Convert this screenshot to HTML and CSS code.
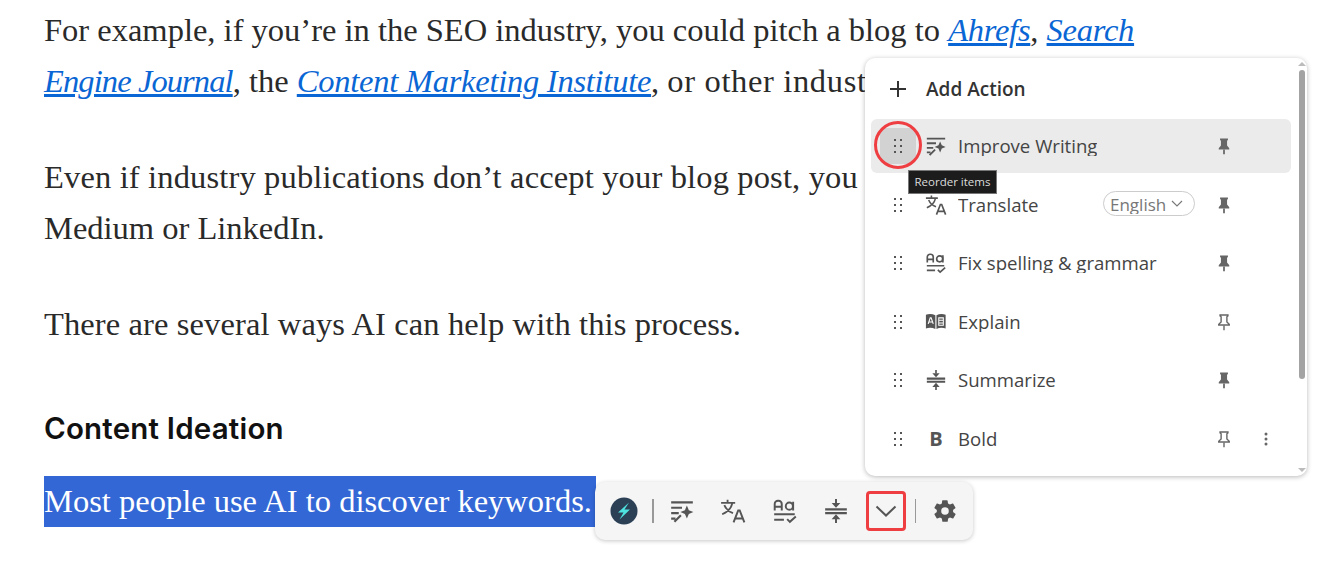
FILE: index.html
```html
<html>
<head>
<meta charset="utf-8">
<title>Content Ideation</title>
<link rel="stylesheet" href="styles.css">
</head>
<body>
<svg class="defs" width="0" height="0">
<defs>
<symbol id="i-improve" viewBox="0 0 24 24"><path d="M2 4h20M2 9h10M2 14h7M2 19h4M5 22l6-6" fill="none" stroke="currentColor" stroke-width="2"/><path d="M16.500 7l1.800 4.200 4.200 1.800-4.200 1.800-1.800 4.200-1.800-4.200-4.200-1.800 4.200-1.800z" fill="currentColor"/></symbol>
<symbol id="i-translate" viewBox="0 0 24 24"><path d="M1 4.500h13M7 1.500v3M11.500 4.500c-1 4.500-4.500 8.500-9.500 10.500M4 6.500c1.500 3.500 4 6 8 7.500" fill="none" stroke="currentColor" stroke-width="1.700"/><path d="M12.500 22.500l4.300-11h1.400l4.300 11M14 19h7" fill="none" stroke="currentColor" stroke-width="1.800"/></symbol>
<symbol id="i-spell" viewBox="0 0 24 24"><path d="M2.500 11.500v-6a3 3 0 0 1 3-3h.5a3 3 0 0 1 3 3v6M2.500 8h6.500" fill="none" stroke="currentColor" stroke-width="1.800"/><circle cx="16" cy="7.500" r="3.300" fill="none" stroke="currentColor" stroke-width="1.800"/><path d="M19.500 3.500v8M2 15h19M2 20h9M14 19.500l2.500 2.500 5.500-5" fill="none" stroke="currentColor" stroke-width="1.800"/></symbol>
<symbol id="i-sum" viewBox="0 0 24 24"><path d="M2 10.500h20M2 14h20" fill="none" stroke="currentColor" stroke-width="2.200"/><path d="M12 1v4M12 23v-4" fill="none" stroke="currentColor" stroke-width="1.800"/><path d="M8 4.500h8L12 9zM8 19.500h8L12 15z" fill="currentColor"/></symbol>
<symbol id="i-book" viewBox="0 0 24 24"><path d="M1 4c3-1 7-1 10.300.5v15C8 18 4 18 1 19zM22.500 4c-3-1-7-1-10 .5v15c3-1.500 7-1.500 10-.5z" fill="currentColor"/><path d="M3.500 14l2.200-6.500h1L9 14M4.500 12h3.500" fill="none" stroke="#fff" stroke-width="1.200"/><path d="M15 7.500h5v8h-5zM15 10h5M15 13h5" fill="none" stroke="#fff" stroke-width="1.100"/></symbol>
<symbol id="i-pin" viewBox="0 0 16 20"><path d="M3.500 1.500h9v1.500l-1 1v5.500l2.500 3v1.500H2v-1.500l2.500-3V4l-1-1z" fill="currentColor"/><path d="M7 14h2v5.500H7z" fill="currentColor"/></symbol>
<symbol id="i-pin-o" viewBox="0 0 16 20"><path d="M3.500 2h9v1l-1.200 1v6l2.700 2.500v1H2v-1L4.700 10V4l-1.200-1z" fill="none" stroke="currentColor" stroke-width="1.600"/><path d="M7.200 14h1.600v5.500H7.200z" fill="currentColor"/></symbol>
<symbol id="i-grip" viewBox="0 0 12 16"><g fill="currentColor"><rect x="2" y="1" width="2" height="2"/><rect x="8" y="1" width="2" height="2"/><rect x="2" y="7" width="2" height="2"/><rect x="8" y="7" width="2" height="2"/><rect x="2" y="13" width="2" height="2"/><rect x="8" y="13" width="2" height="2"/></g></symbol>
</defs>
</svg>

<div class="article">
<p>For example, if you’re in the SEO industry, you could pitch a blog to <a href="#">Ahrefs</a>, <a href="#">Search</a> <a href="#" class="tight">Engine Journal</a>, the <a href="#">Content Marketing Institute</a>, <span class="spread">or other industry publications.</span></p>
<p><span class="wider">Even if industry publications don’t accept your blog post, you can still publish it on</span> Medium or LinkedIn.</p>
<p class="wide">There are several ways AI can help with this process.</p>
<h3>Content Ideation</h3>
<p class="last"><span class="sel">Most people use AI to discover keywords.</span></p>
</div>

<div class="menu">
  <div class="add"><svg class="plus" viewBox="0 0 18 18"><path d="M9 1v16M1 9h16" stroke="currentColor" stroke-width="2"/></svg><span>Add Action</span></div>
  <div class="rows">
    <div class="row on">
      <span class="grip hot"><svg><use href="#i-grip"/></svg></span>
      <svg class="ico"><use href="#i-improve"/></svg>
      <span class="lbl">Improve Writing</span>
      <svg class="pin"><use href="#i-pin"/></svg>
    </div>
    <div class="row">
      <span class="grip"><svg><use href="#i-grip"/></svg></span>
      <svg class="ico"><use href="#i-translate"/></svg>
      <span class="lbl">Translate</span>
      <span class="lang"><span class="lang-t">English</span><svg viewBox="0 0 12 7"><path d="M1 1l5 5 5-5" fill="none" stroke="currentColor" stroke-width="1.100"/></svg></span>
      <svg class="pin"><use href="#i-pin"/></svg>
    </div>
    <div class="row">
      <span class="grip"><svg><use href="#i-grip"/></svg></span>
      <svg class="ico"><use href="#i-spell"/></svg>
      <span class="lbl">Fix spelling &amp; grammar</span>
      <svg class="pin"><use href="#i-pin"/></svg>
    </div>
    <div class="row">
      <span class="grip"><svg><use href="#i-grip"/></svg></span>
      <svg class="ico"><use href="#i-book"/></svg>
      <span class="lbl">Explain</span>
      <svg class="pin"><use href="#i-pin-o"/></svg>
    </div>
    <div class="row">
      <span class="grip"><svg><use href="#i-grip"/></svg></span>
      <svg class="ico"><use href="#i-sum"/></svg>
      <span class="lbl">Summarize</span>
      <svg class="pin"><use href="#i-pin"/></svg>
    </div>
    <div class="row">
      <span class="grip"><svg><use href="#i-grip"/></svg></span>
      <span class="ico bold">B</span>
      <span class="lbl">Bold</span>
      <svg class="pin"><use href="#i-pin-o"/></svg>
      <svg class="more" viewBox="0 0 4 14"><circle cx="2" cy="2" r="1.500"/><circle cx="2" cy="7" r="1.500"/><circle cx="2" cy="12" r="1.500"/></svg>
    </div>
  </div>
  <div class="bar"><i class="up"></i><b></b><i class="dn"></i></div>
  <div class="tip">Reorder items</div>
  <div class="ring"></div>
</div>

<div class="toolbar">
  <span class="logo"><svg viewBox="0 0 28 28"><circle cx="14" cy="14" r="13.500" fill="#2b3f55"/><path d="M19 5.500L8 15.500h5.500L9.500 22.500l10.500-10h-5.500z" fill="#4fe3e0"/></svg></span>
  <span class="sep"></span>
  <svg class="tb"><use href="#i-improve"/></svg>
  <svg class="tb"><use href="#i-translate"/></svg>
  <svg class="tb"><use href="#i-spell"/></svg>
  <svg class="tb"><use href="#i-sum"/></svg>
  <span class="chev"><svg viewBox="0 0 22 12"><path d="M1.500 1.500L11 10.500l9.500-9" fill="none" stroke="currentColor" stroke-width="2"/></svg></span>
  <span class="sep thin"></span>
  <svg class="gear" viewBox="0 0 24 24"><path fill-rule="evenodd" d="M19.400 13c.1-.3.100-.7.100-1s0-.7-.1-1l2.100-1.600c.2-.2.200-.4.100-.6l-2-3.500c-.1-.2-.4-.3-.6-.2l-2.500 1c-.5-.4-1.100-.7-1.700-1L14.400 2.500c0-.3-.2-.5-.5-.5h-4c-.2 0-.4.200-.5.400L9.100 5.100c-.6.300-1.200.6-1.700 1l-2.500-1c-.2-.1-.5 0-.6.200l-2 3.500c-.1.200-.1.500.1.600L4.500 11c0 .3-.1.700-.1 1s0 .7.100 1l-2.100 1.600c-.2.200-.2.400-.1.600l2 3.500c.1.200.4.300.6.200l2.500-1c.5.400 1.100.7 1.700 1l.4 2.600c0 .3.200.5.500.5h4c.2 0 .4-.2.500-.4l.4-2.700c.6-.3 1.200-.6 1.700-1l2.500 1c.2.100.5 0 .6-.2l2-3.500c.1-.2.1-.5-.1-.6zM12 15.500a3.500 3.500 0 1 1 0-7 3.500 3.500 0 0 1 0 7z" fill="currentColor"/></svg>
</div>
</body>
</html>
```

FILE: styles.css
```css
html,body{margin:0;padding:0;background:#fff;overflow:hidden}
body{height:562px;position:relative;font-family:"Open Sans","Noto Sans",sans-serif}
.defs{position:absolute}

.article{width:1100px;padding:5px 0 0 44px;font-family:"Liberation Serif",serif;font-size:32.500px;line-height:51px;color:#2a2a2a}
.article p{margin:0 0 45px}
.article a{color:#0a66d4;font-style:italic;text-decoration:underline;letter-spacing:-.25px}
.article a.tight{letter-spacing:-.9px}
.article .wide{letter-spacing:.11px}
.article .wider{letter-spacing:.15px}
.article .spread{letter-spacing:.65px}
.article h3{margin:56px 0 26px;font-family:Inter,"Open Sans",sans-serif;font-size:29.500px;line-height:44px;font-weight:600;letter-spacing:.2px;color:#111}
.article .last{margin:0}
.sel{background:#3367d6;color:#fff;display:inline-block;padding-right:4px}

.menu{position:absolute;left:865px;top:58px;width:442px;height:418px;box-sizing:border-box;background:#fff;border-radius:10px;box-shadow:0 1px 5px rgba(0,0,0,.28);color:#444}
.add{display:flex;align-items:center;height:30px;margin:16px 0 0 24px;font-size:19px;font-weight:600;color:#333}
.plus{width:18px;height:18px;margin-right:19px;color:#333}
.rows{margin:15px 0 0 6px;width:420px}
.row{display:flex;align-items:center;height:54px;margin-bottom:4.500px;border-radius:6px;position:relative}
.row.on{background:#ebebeb}
.grip{width:36px;height:36px;margin-left:9px;display:flex;align-items:center;justify-content:center;color:#555;border-radius:6px}
.grip svg{width:12px;height:16px}
.grip.hot{background:#d2d2d2}
.ico{width:22px;height:22px;margin-left:9px;color:#555}
.bold{font-weight:700;font-size:20px;line-height:22px;text-align:center}
.lbl{margin:0 0 .6px 11px;font-size:18.600px;line-height:21px;height:21px;overflow:hidden;color:#444;white-space:nowrap}
.lang{position:absolute;left:232px;top:13px;width:92px;height:25px;box-sizing:border-box;border:1px solid #ccc;border-radius:13px;font-size:17px;padding-left:6px;color:#777;display:flex;align-items:center;white-space:nowrap}
.lang-t{line-height:20px;height:19px;margin-top:3px;overflow:hidden}
.lang svg{width:12px;height:7px;margin-left:5px}
.pin{position:absolute;left:345.500px;top:18px;width:14px;height:18px;color:#666}
.more{position:absolute;left:393px;top:20px;width:4px;height:14px;fill:#666}
.bar{position:absolute;right:2px;top:0;bottom:0;width:6px}
.bar b{position:absolute;left:0;right:0;top:12px;height:309px;background:#a3a3a3;border-radius:3px}
.bar i{position:absolute;left:-1px;width:0;height:0;border-left:4px solid transparent;border-right:4px solid transparent}
.bar .up{top:4px;border-bottom:4px solid #bbb}
.bar .dn{bottom:4px;border-top:4px solid #bbb}
.tip{position:absolute;left:43px;top:112px;width:89px;height:24px;background:#1c1c1c;border:1px solid #777;box-sizing:border-box;color:#ddd;font-size:11.500px;line-height:22px;text-align:center;white-space:nowrap}
.ring{position:absolute;left:9px;top:63px;width:48px;height:48px;border:3px solid #ef3e42;border-radius:50%;box-sizing:border-box}

.toolbar{position:absolute;left:595px;top:482px;width:378px;height:58px;box-sizing:border-box;background:#f5f5f5;border-radius:10px;box-shadow:0 1px 4px rgba(0,0,0,.22);display:flex;align-items:center;padding-left:15px;color:#555}
.logo{width:28px;height:28px}
.logo svg{width:28px;height:28px;display:block}
.sep{width:2px;height:24px;background:#999;margin:0 15px 0 14px}
.tb{width:26px;height:26px;margin-right:25.250px}
.chev{width:40px;height:40px;box-sizing:border-box;border:3px solid #ef3e42;border-radius:4px;display:flex;align-items:center;justify-content:center;margin-left:-8.500px}
.chev svg{width:22px;height:12px}
.sep.thin{width:1px;margin:0 16px 0 9px}
.gear{width:26px;height:26px}
```
